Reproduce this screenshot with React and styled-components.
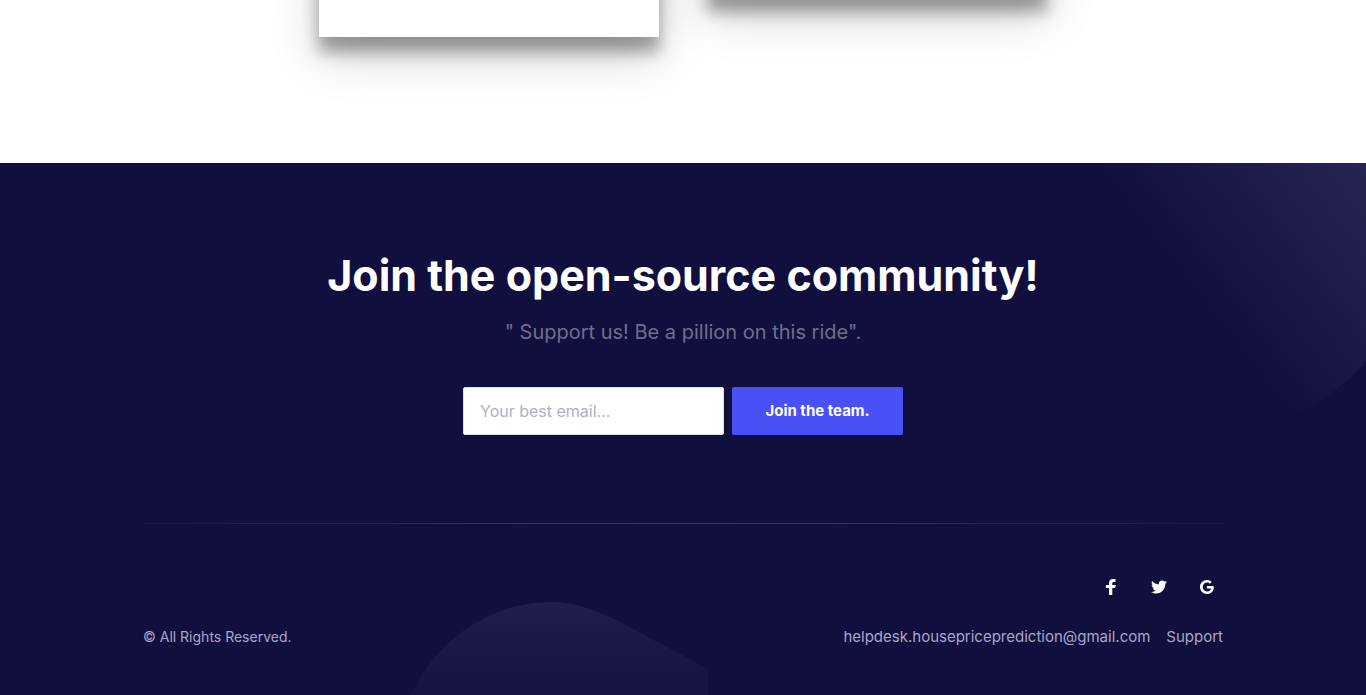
import React from 'react';
import styled, { createGlobalStyle } from 'styled-components';

const GlobalStyle = createGlobalStyle`
  *, *::before, *::after { box-sizing: border-box; }
  body {
    margin: 0;
    background: #fff;
    font-family: Inter, "Open Sans", "Liberation Sans", sans-serif;
    -webkit-font-smoothing: antialiased;
  }
`;

const CardsSection = styled.section`
  overflow: hidden;
  padding: 0 24px 126px;
`;

const CardGrid = styled.div`
  display: grid;
  grid-template-columns: repeat(2, minmax(0, 340px));
  justify-content: center;
  align-items: start;
  gap: 48px;
  margin-top: -63px;
`;

const Card = styled.article`
  height: ${(p) => (p.$tall ? '100px' : '60px')};
  background: #fff;
  box-shadow: 0 15px 15px 0 rgba(0, 0, 0, 0.34), 0 17px 50px 0 rgba(0, 0, 0, 0.19);
`;

const DarkArea = styled.div`
  position: relative;
  overflow: hidden;
  padding: 0 24px;
  background: #110f3e;
`;

const CornerGlow = styled.svg`
  position: absolute;
  top: 0;
  right: 0;
  width: 344px;
  height: 272px;
`;

const BottomWave = styled.svg`
  position: absolute;
  bottom: 0;
  left: 30%;
  width: 300px;
  height: 94px;
`;

const Container = styled.div`
  position: relative;
  max-width: 1080px;
  margin: 0 auto;
`;

const Join = styled.section`
  display: flex;
  flex-direction: column;
  align-items: center;
  padding: 88px 0;
  text-align: center;
`;

const Title = styled.h2`
  margin: 0 0 18px;
  color: #fff;
  font-size: 43px;
  font-weight: 700;
  line-height: 48px;
`;

const Subtitle = styled.p`
  margin: 0 0 40px;
  color: #706e8b;
  font-size: 20px;
  line-height: 30px;
`;

const Form = styled.form`
  display: flex;
  gap: 8px;
  width: 100%;
  max-width: 440px;
`;

const EmailInput = styled.input`
  flex: 1;
  min-width: 0;
  height: 48px;
  padding: 0 16px;
  border: 1px solid #dcdbe8;
  border-radius: 2px;
  background: #fff;
  color: #110f3e;
  font: 400 16px/24px Inter, "Open Sans", sans-serif;
  &::placeholder { color: #b0aec8; opacity: 1; }
`;

const JoinButton = styled.button`
  flex: 0 0 171px;
  height: 48px;
  padding: 0;
  border: 0;
  border-radius: 2px;
  background: #4950f6;
  color: #fff;
  font: 700 15px/24px Inter, "Open Sans", sans-serif;
  cursor: pointer;
`;

const Footer = styled.footer`
  padding: 48px 0;
  background: linear-gradient(90deg, rgba(112, 110, 160, 0.1), rgba(112, 110, 160, 0.45) 50%, rgba(112, 110, 160, 0.1))
    top / 100% 1px no-repeat;
`;

const SocialList = styled.ul`
  display: flex;
  justify-content: flex-end;
  gap: 16px;
  margin: 0 0 24px;
  padding: 0;
  list-style: none;
`;

const SocialLink = styled.a`
  display: block;
  padding: 8px;
  svg { display: block; width: 16px; height: 16px; fill: #fff; }
`;

const Legal = styled.div`
  display: flex;
  flex-wrap: wrap;
  justify-content: space-between;
  color: #a9a7c8;
  font-size: 14px;
  line-height: 20px;
`;

const LegalLinks = styled.nav`
  display: flex;
  gap: 16px;
  font-size: 15px;
`;

const LegalLink = styled.a`
  color: inherit;
  text-decoration: none;
`;

const socials = [
  {
    name: 'Facebook',
    path: 'M6.023 16L6 9H3V6h3V4c0-2.7 1.672-4 4.08-4 1.153 0 2.144.086 2.433.124v2.821h-1.67c-1.31 0-1.563.623-1.563 1.536V6H13l-1 3H9.28v7H6.023z',
  },
  {
    name: 'Twitter',
    path: 'M16 3c-.6.3-1.2.4-1.9.5.7-.4 1.2-1 1.4-1.8-.6.4-1.3.6-2.1.8-.6-.6-1.5-1-2.4-1-1.7 0-3.2 1.5-3.2 3.3 0 .3 0 .5.1.7-2.7-.1-5.2-1.4-6.8-3.4-.3.5-.4 1-.4 1.7 0 1.1.6 2.1 1.5 2.7-.5 0-1-.2-1.5-.4 0 1.6 1.1 2.9 2.6 3.2-.3.1-.6.1-.9.1-.2 0-.4 0-.6-.1.4 1.3 1.6 2.3 3.1 2.3-1.1.9-2.5 1.4-4.1 1.4H0c1.5.9 3.2 1.5 5 1.5 6 0 9.3-5 9.3-9.3v-.4C15 4.3 15.6 3.7 16 3z',
  },
  {
    name: 'Google',
    path: 'M7.9 7v2.4H12c-.2 1-1.2 3-4 3-2.4 0-4.3-2-4.3-4.4 0-2.4 2-4.4 4.3-4.4 1.4 0 2.3.6 2.8 1.1l1.9-1.8C11.5 1.7 9.9 1 8 1 4.1 1 1 4.1 1 8s3.1 7 7 7c4 0 6.7-2.8 6.7-6.8 0-.5 0-.8-.1-1.2H7.9z',
  },
];

export default function App() {
  return (
    <>
      <GlobalStyle />
      <CardsSection>
        <CardGrid>
          <Card $tall />
          <Card />
        </CardGrid>
      </CardsSection>
      <DarkArea>
        <CornerGlow viewBox="0 0 344 272" aria-hidden="true">
          <defs>
            <linearGradient id="glow" gradientUnits="userSpaceOnUse" x1="170" y1="132" x2="343" y2="-2">
              <stop offset="0" stopColor="#f0f0ff" stopOpacity="0" />
              <stop offset="1" stopColor="#f0f0ff" stopOpacity="0.1" />
            </linearGradient>
          </defs>
          <circle cx="191" cy="69" r="200" fill="url(#glow)" />
        </CornerGlow>
        <BottomWave viewBox="0 0 300 94" aria-hidden="true">
          <defs>
            <linearGradient id="wave" x1="0" y1="0" x2="0" y2="1">
              <stop offset="0" stopColor="#f0f0ff" stopOpacity="0.065" />
              <stop offset="1" stopColor="#f0f0ff" stopOpacity="0.018" />
            </linearGradient>
          </defs>
          <path d="M1 94C25 40 80 1 141 1c24 0 44 8 67 19l90 48v26z" fill="url(#wave)" />
        </BottomWave>
        <Container>
          <Join>
            <Title>Join the open-source community!</Title>
            <Subtitle>" Support us! Be a pillion on this ride".</Subtitle>
            <Form onSubmit={(e) => e.preventDefault()}>
              <EmailInput type="email" placeholder="Your best email…" aria-label="Your best email" />
              <JoinButton type="submit">Join the team.</JoinButton>
            </Form>
          </Join>
          <Footer>
            <SocialList>
              {socials.map((s) => (
                <li key={s.name}>
                  <SocialLink href="#" aria-label={s.name}>
                    <svg viewBox="0 0 16 16" aria-hidden="true"><path d={s.path} /></svg>
                  </SocialLink>
                </li>
              ))}
            </SocialList>
            <Legal>
              <span>© All Rights Reserved.</span>
              <LegalLinks>
                <LegalLink href="mailto:helpdesk.housepriceprediction@gmail.com">helpdesk.housepriceprediction@gmail.com</LegalLink>
                <LegalLink href="#">Support</LegalLink>
              </LegalLinks>
            </Legal>
          </Footer>
        </Container>
      </DarkArea>
    </>
  );
}
